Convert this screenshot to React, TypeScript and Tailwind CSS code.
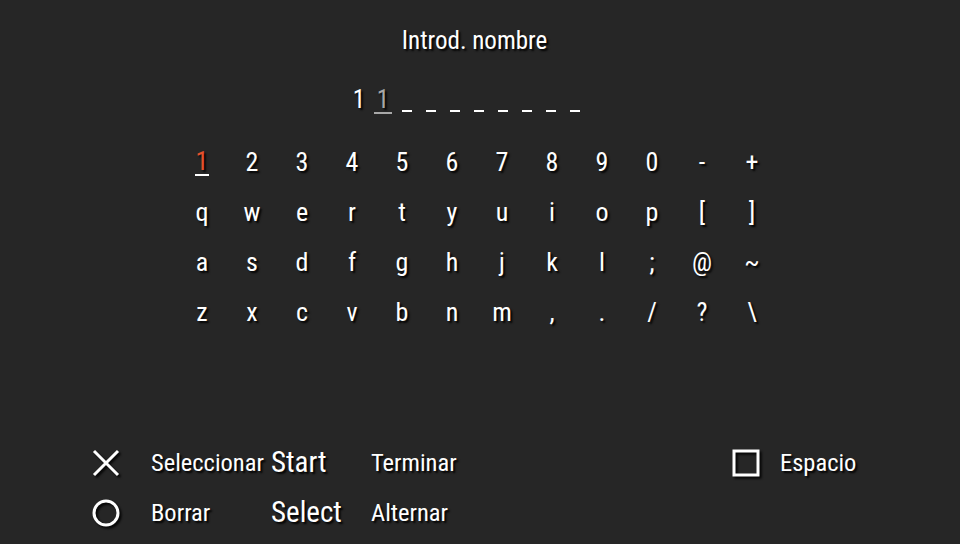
const rows = [
  ["1", "2", "3", "4", "5", "6", "7", "8", "9", "0", "-", "+"],
  ["q", "w", "e", "r", "t", "y", "u", "i", "o", "p", "[", "]"],
  ["a", "s", "d", "f", "g", "h", "j", "k", "l", ";", "@", "~"],
  ["z", "x", "c", "v", "b", "n", "m", ",", ".", "/", "?", "\\"],
];

const font = "font-['Roboto_Condensed','Liberation_Sans_Narrow',Roboto,sans-serif]";
const shadow = "[text-shadow:2px_2px_2px_rgba(0,0,0,0.95)]";

function Cross() {
  return (
    <svg width="30" height="30" viewBox="0 0 30 30" className="drop-shadow-[2px_2px_1px_rgba(0,0,0,0.9)]">
      <path d="M3 3 L27 27 M27 3 L3 27" stroke="#fff" strokeWidth="3" />
    </svg>
  );
}

function Circle() {
  return (
    <svg width="30" height="30" viewBox="0 0 30 30" className="drop-shadow-[2px_2px_1px_rgba(0,0,0,0.9)]">
      <circle cx="15" cy="15" r="12" fill="none" stroke="#fff" strokeWidth="3" />
    </svg>
  );
}

function Square() {
  return (
    <svg width="30" height="30" viewBox="0 0 30 30" className="drop-shadow-[2px_2px_1px_rgba(0,0,0,0.9)]">
      <rect x="3" y="3" width="24" height="24" fill="none" stroke="#fff" strokeWidth="3" />
    </svg>
  );
}

export default function App() {
  const name = ["1", "1", "", "", "", "", "", "", "", ""];
  return (
    <div className={`w-[960px] h-[544px] bg-[#262626] text-white flex flex-col ${font} ${shadow}`}>
      <div className="pt-[26px] pr-[11px] text-center text-[25px] leading-[30px]">Introd. nombre</div>

      <div className="mt-[28px] flex justify-center pr-[26px]">
        {name.map((c, i) => (
          <div key={i} className="w-[24px] h-[30px] flex flex-col items-center justify-end">
            {i === 0 && <span className="text-[25px] leading-[28px]">1</span>}
            {i === 1 && (
              <span className="text-[25px] text-[#a8a8a8] border-b-2 border-[#a8a8a8] px-[3px] leading-[24px]">1</span>
            )}
            {i > 1 && <span className="w-[10px] h-[2px] bg-white mb-[2px]" />}
          </div>
        ))}
      </div>

      <div className="mt-[23px] flex flex-col items-center pr-[6px]">
        {rows.map((row, r) => (
          <div key={r} className="flex h-[50px] items-center">
            {row.map((k, i) => (
              <div key={i} className="w-[50px] flex justify-center text-[26px] leading-[30px]">
                {r === 0 && i === 0 ? (
                  <span className="text-[#e4512c] border-b-2 border-white leading-[26px] px-[1px]">{k}</span>
                ) : (
                  <span>{k}</span>
                )}
              </div>
            ))}
          </div>
        ))}
      </div>

      <div className="mt-auto mb-[6px] pl-[91px] flex text-[24.5px]">
        <div className="grid grid-cols-[60px_120px_100px_360px] grid-rows-[50px_50px] items-center">
          <Cross />
          <span>Seleccionar</span>
          <span className="text-[29px]">Start</span>
          <span>Terminar</span>
          <Circle />
          <span>Borrar</span>
          <span className="text-[29px]">Select</span>
          <span>Alternar</span>
        </div>
        <div className="flex h-[50px] items-center gap-[19px]">
          <Square />
          <span>Espacio</span>
        </div>
      </div>
    </div>
  );
}
